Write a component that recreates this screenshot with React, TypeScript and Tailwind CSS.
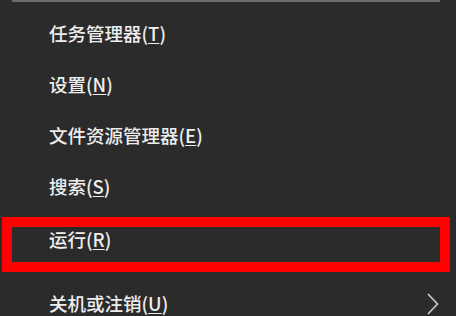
import React from "react";

const font = { fontFamily: '"Noto Sans CJK SC", "Noto Sans", sans-serif' };

function Label({ text, k }: { text: string; k: string }) {
  return (
    <span className="text-[18.5px] leading-none font-medium text-[#eeeeee]" style={font}>
      {text}(<span className="underline underline-offset-2">{k}</span>)
    </span>
  );
}

export default function App() {
  return (
    <div className="w-[456px] h-[316px] overflow-hidden bg-[#2b2b2b] flex flex-col">
      <div className="h-[2px] ml-[12px] w-[428px] bg-[#6c6c6c] shrink-0" />
      <div className="h-[6px] shrink-0" />
      <div className="h-[51px] flex items-center pl-[49px] shrink-0">
        <Label text="任务管理器" k="T" />
      </div>
      <div className="h-[51px] flex items-center pl-[49px] shrink-0">
        <Label text="设置" k="N" />
      </div>
      <div className="h-[51px] flex items-center pl-[49px] shrink-0">
        <Label text="文件资源管理器" k="E" />
      </div>
      <div className="h-[51px] flex items-center pl-[49px] shrink-0">
        <Label text="搜索" k="S" />
      </div>
      <div className="h-[5px] shrink-0" />
      <div className="h-[55px] ml-[2px] w-[448px] border-[10px] border-[#ff0000] flex items-center pl-[37px] pb-[10px] shrink-0">
        <Label text="运行" k="R" />
      </div>
      <div className="h-[63px] flex items-center justify-between pl-[49px] pr-[16px] shrink-0">
        <Label text="关机或注销" k="U" />
        <svg width="14" height="22" viewBox="0 0 14 22" fill="none">
          <path d="M2 1 L11.5 11 L2 21" stroke="#cfcfcf" strokeWidth="1.6" />
        </svg>
      </div>
    </div>
  );
}
